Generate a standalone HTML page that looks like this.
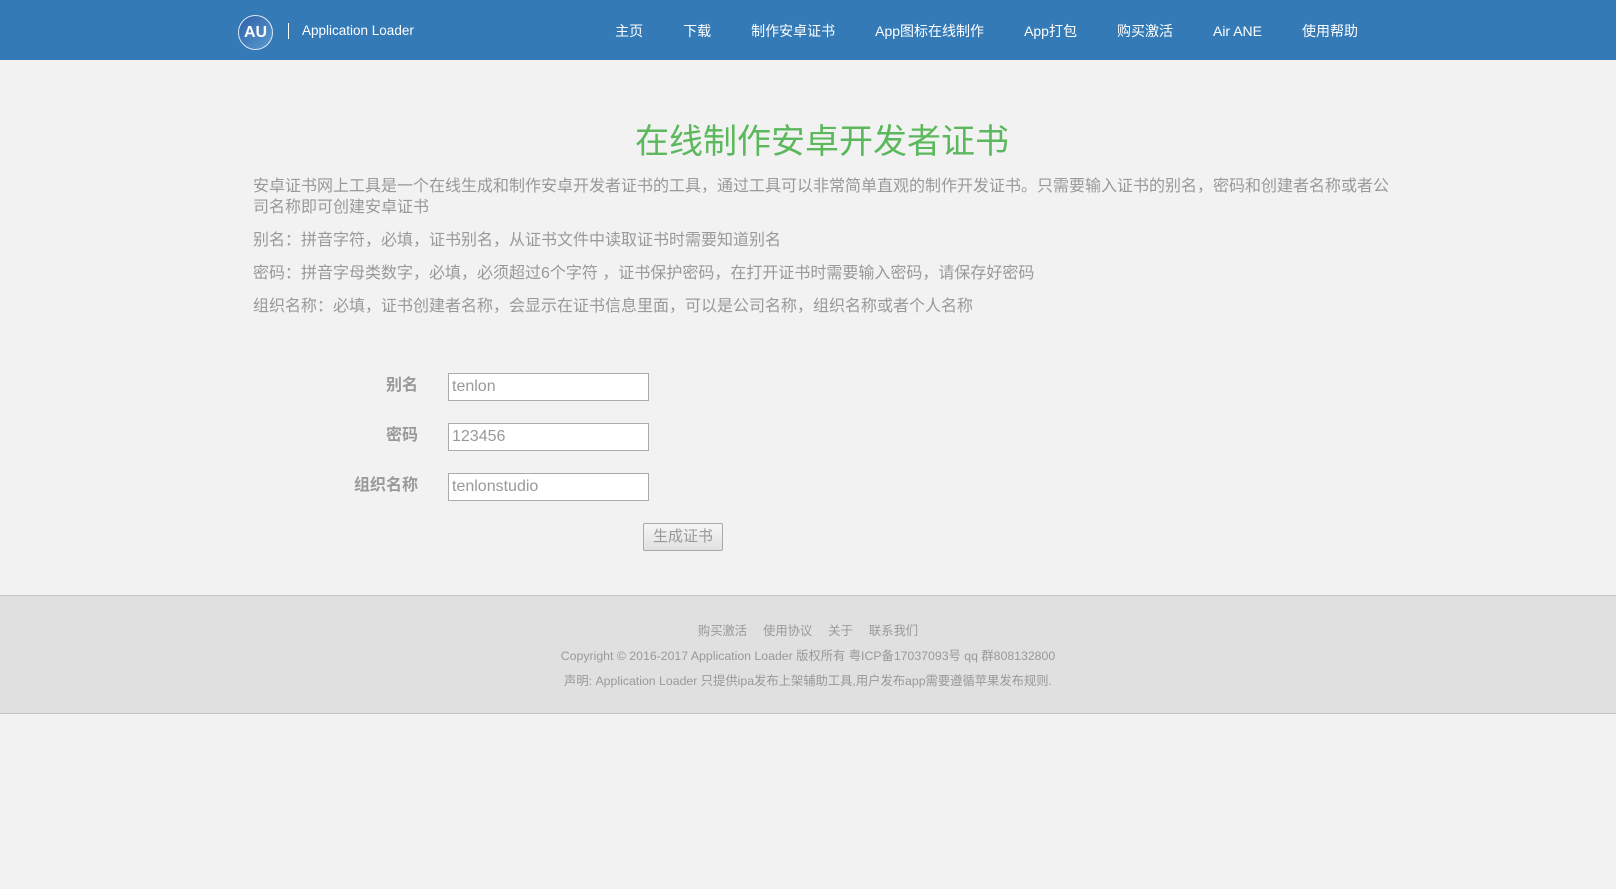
<!DOCTYPE html>
<html><head><meta charset="utf-8">
<style>
*{margin:0;padding:0;box-sizing:border-box}
body{width:1616px;height:889px;background:#f2f2f2;font-family:"Liberation Sans","Noto Sans CJK SC",sans-serif;position:relative;overflow:hidden}
.hd{position:absolute;left:0;top:0;width:1616px;height:60px;background:#337ab7}
.logo{position:absolute;left:238px;top:15px;width:35px;height:35px;border-radius:50%;border:1.5px solid #dfe8f3;background:linear-gradient(135deg,#2f5fa8,#5a9bd0);color:#fff;font-size:16px;font-weight:bold;line-height:33px;text-align:center}
.sep{position:absolute;left:288px;top:23px;width:1px;height:16px;background:#fff}
.brand{position:absolute;left:302px;top:23px;color:#fff;font-size:13.5px}
.nav{position:absolute;right:258px;top:21px;display:flex;align-items:baseline;color:#fff;font-size:14px;line-height:20px}
.nav span{margin-left:40px;display:inline-block;height:20px}
h1{position:absolute;left:0;width:1644px;text-align:center;top:114px;font-size:34px;font-weight:normal;color:#5cb85c}
.txt{position:absolute;left:253px;width:1140px;top:176px;color:#999;font-size:16px;line-height:21px}
.txt p{margin-bottom:12px}
.lb{position:absolute;width:200px;text-align:right;left:218px;color:#999;font-weight:bold;font-size:16px}
.in{position:absolute;left:448px;width:201px;height:28px;background:#fff;border:1px solid #aaa;color:#999;font-size:16px;padding-left:3px;line-height:26px}
.btn{position:absolute;left:643px;top:523px;width:80px;height:28px;border:1px solid #aaa;border-radius:2px;background:linear-gradient(#f6f6f6,#e0e0e0);color:#999;font-size:15px;text-align:center;line-height:26px}
.ft{position:absolute;left:0;top:595px;width:1616px;height:119px;background:#e0e0e0;border-top:1px solid #c4c4c4;border-bottom:1px solid #c4c4c4;text-align:center;color:#999;font-size:12.3px}
.ft div{position:absolute;left:0;width:1616px}
.ft span{margin:0 8px}
</style></head><body>
<div class="hd">
<div class="logo">AU</div><div class="sep"></div><div class="brand">Application Loader</div>
<div class="nav"><span>主页</span><span>下载</span><span>制作安卓证书</span><span>App图标在线制作</span><span>App打包</span><span>购买激活</span><span>Air ANE</span><span>使用帮助</span></div>
</div>
<h1>在线制作安卓开发者证书</h1>
<div class="txt">
<p>安卓证书网上工具是一个在线生成和制作安卓开发者证书的工具，通过工具可以非常简单直观的制作开发证书。只需要输入证书的别名，密码和创建者名称或者公司名称即可创建安卓证书</p>
<p>别名：拼音字符，必填，证书别名，从证书文件中读取证书时需要知道别名</p>
<p>密码：拼音字母类数字，必填，必须超过6个字符 ，证书保护密码，在打开证书时需要输入密码，请保存好密码</p>
<p>组织名称：必填，证书创建者名称，会显示在证书信息里面，可以是公司名称，组织名称或者个人名称</p>
</div>
<div class="lb" style="top:371px">别名</div><div class="in" style="top:373px">tenlon</div>
<div class="lb" style="top:421px">密码</div><div class="in" style="top:423px">123456</div>
<div class="lb" style="top:471px">组织名称</div><div class="in" style="top:473px">tenlonstudio</div>
<div class="btn">生成证书</div>
<div class="ft">
<div style="top:25px"><span>购买激活</span><span>使用协议</span><span>关于</span><span>联系我们</span></div>
<div style="top:50px">Copyright © 2016-2017 Application Loader 版权所有 粤ICP备17037093号 qq 群808132800</div>
<div style="top:75px">声明: Application Loader 只提供ipa发布上架辅助工具,用户发布app需要遵循苹果发布规则.</div>
</div>
</body></html>
